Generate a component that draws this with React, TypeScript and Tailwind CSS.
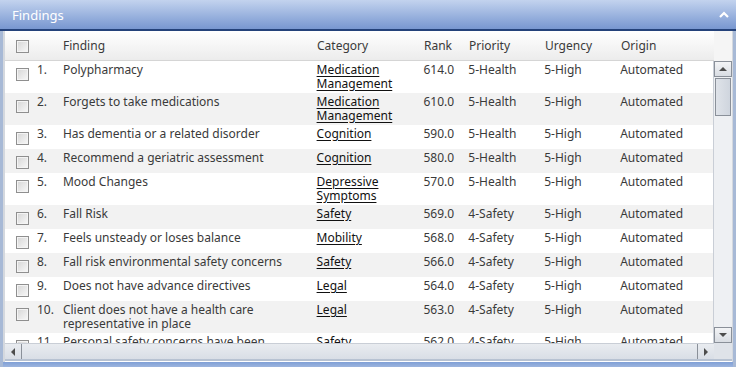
import React from "react";

type Finding = {
  n: number;
  finding: string[];
  category: string[];
  rank: string;
  priority: string;
  urgency: string;
  origin: string;
};

const findings: Finding[] = [
  { n: 1, finding: ["Polypharmacy"], category: ["Medication", "Management"], rank: "614.0", priority: "5-Health", urgency: "5-High", origin: "Automated" },
  { n: 2, finding: ["Forgets to take medications"], category: ["Medication", "Management"], rank: "610.0", priority: "5-Health", urgency: "5-High", origin: "Automated" },
  { n: 3, finding: ["Has dementia or a related disorder"], category: ["Cognition"], rank: "590.0", priority: "5-Health", urgency: "5-High", origin: "Automated" },
  { n: 4, finding: ["Recommend a geriatric assessment"], category: ["Cognition"], rank: "580.0", priority: "5-Health", urgency: "5-High", origin: "Automated" },
  { n: 5, finding: ["Mood Changes"], category: ["Depressive", "Symptoms"], rank: "570.0", priority: "5-Health", urgency: "5-High", origin: "Automated" },
  { n: 6, finding: ["Fall Risk"], category: ["Safety"], rank: "569.0", priority: "4-Safety", urgency: "5-High", origin: "Automated" },
  { n: 7, finding: ["Feels unsteady or loses balance"], category: ["Mobility"], rank: "568.0", priority: "4-Safety", urgency: "5-High", origin: "Automated" },
  { n: 8, finding: ["Fall risk environmental safety concerns"], category: ["Safety"], rank: "566.0", priority: "4-Safety", urgency: "5-High", origin: "Automated" },
  { n: 9, finding: ["Does not have advance directives"], category: ["Legal"], rank: "564.0", priority: "4-Safety", urgency: "5-High", origin: "Automated" },
  { n: 10, finding: ["Client does not have a health care", "representative in place"], category: ["Legal"], rank: "563.0", priority: "4-Safety", urgency: "5-High", origin: "Automated" },
  { n: 11, finding: ["Personal safety concerns have been"], category: ["Safety"], rank: "562.0", priority: "4-Safety", urgency: "5-High", origin: "Automated" },
];

const Checkbox = () => (
  <span className="block h-[13px] w-[13px] border border-[#8f8f8f] bg-gradient-to-br from-[#d6d6d6] to-[#f8f8f8] shadow-[inset_0_0_0_1px_#f4f4f4]" />
);

const Arrow = ({ dir }: { dir: "up" | "down" | "left" | "right" }) => {
  const pts = {
    up: "0,6 4,2 8,6",
    down: "0,2 4,6 8,2",
    left: "6,0 2,4 6,8",
    right: "2,0 6,4 2,8",
  }[dir];
  return (
    <svg width="8" height="8" viewBox="0 0 8 8">
      <polygon points={pts} fill="#4d4d4d" />
    </svg>
  );
};

const App = () => {
  return (
    <div className="flex h-[367px] w-[736px] flex-col overflow-hidden bg-[#c9d6ea] font-['Segoe_UI','Noto_Sans',sans-serif] text-[12px] leading-[14px] text-[#3a3a3a]">
      {/* title bar */}
      <div className="flex h-[31px] shrink-0 items-center justify-between border-b-2 border-[#24427a] bg-gradient-to-b from-[#c3d3ee] to-[#7897d0] pl-3 pr-[6px]">
        <span className="text-[13px] text-white">Findings</span>
        <svg width="12" height="10" viewBox="0 0 12 10">
          <polyline points="2,7 6,3 10,7" fill="none" stroke="white" strokeWidth="2.2" />
        </svg>
      </div>

      <div className="flex min-h-0 flex-1 flex-col border-x-[3px] border-[#a7b9d6]">
        <div className="flex flex-1 flex-col border-l-2 border-r border-[#d4d8de] bg-white">
          {/* header */}
          <div className="flex h-[30px] shrink-0">
            <div className="flex w-[709px] items-center border-b border-[#d5d5d5] bg-gradient-to-b from-white to-[#ececec] pt-[1px]">
              <div className="w-[32px] pl-[11px]">
                <Checkbox />
              </div>
              <div className="w-[26px]" />
              <div className="w-[254px]">Finding</div>
              <div className="w-[107px]">Category</div>
              <div className="w-[45px]">Rank</div>
              <div className="w-[76px]">Priority</div>
              <div className="w-[76px]">Urgency</div>
              <div className="w-[93px]">Origin</div>
            </div>
            <div className="flex-1 bg-[#f5f5f5]" />
          </div>

          {/* rows + vertical scrollbar */}
          <div className="flex h-[282px] shrink-0">
            <div className="w-[709px] overflow-hidden">
              {findings.map((f, i) => (
                <div
                  key={f.n}
                  className={`flex min-h-[24px] pt-[2px] pb-[2px] ${i % 2 === 1 ? "bg-[#f2f2f2]" : "bg-white"}`}
                >
                  <div className="w-[32px] pl-[11px] pt-[5px]">
                    <Checkbox />
                  </div>
                  <div className="w-[26px]">{f.n}.</div>
                  <div className="w-[254px]">
                    {f.finding.map((l) => (
                      <div key={l}>{l}</div>
                    ))}
                  </div>
                  <div className="w-[107px] text-[#111]">
                    {f.category.map((l) => (
                      <div key={l} className="underline underline-offset-2">{l}</div>
                    ))}
                  </div>
                  <div className="w-[45px]">{f.rank}</div>
                  <div className="w-[76px]">{f.priority}</div>
                  <div className="w-[76px]">{f.urgency}</div>
                  <div className="w-[93px]">{f.origin}</div>
                </div>
              ))}
            </div>
            <div className="flex w-[19px] flex-col border-l border-[#c9ced6] bg-[#eef0f3]">
              <div className="flex h-[16px] items-center justify-center border border-[#8a9099] bg-gradient-to-b from-[#f3f4f6] to-[#d9dde3]">
                <Arrow dir="up" />
              </div>
              <div className="mx-[1px] mt-[1px] h-[38px] border border-[#8a9099] bg-gradient-to-r from-[#dfe3e9] to-[#cfd5de]" />
              <div className="flex-1" />
              <div className="flex h-[16px] items-center justify-center border border-[#8a9099] bg-gradient-to-b from-[#f3f4f6] to-[#d9dde3]">
                <Arrow dir="down" />
              </div>
            </div>
          </div>

          {/* horizontal scrollbar */}
          <div className="flex h-[16px] shrink-0">
            <div className="flex w-[709px] border-t border-[#c9ced6] bg-gradient-to-b from-[#e9ecf0] to-[#d9dee6]">
              <div className="flex w-[17px] items-center justify-center border-r border-[#8a9099]">
                <Arrow dir="left" />
              </div>
              <div className="flex-1" />
              <div className="flex w-[17px] items-center justify-center border-l border-[#8a9099]">
                <Arrow dir="right" />
              </div>
            </div>
            <div className="flex-1 bg-[#dfe3e9]" />
          </div>
          <div className="h-[2px] shrink-0 bg-[#b7c2d2]" />
        </div>
        <div className="h-[5px] shrink-0 bg-gradient-to-b from-[#7f9fd6] to-[#9db5de]" />
      </div>
    </div>
  );
};

export default App;
